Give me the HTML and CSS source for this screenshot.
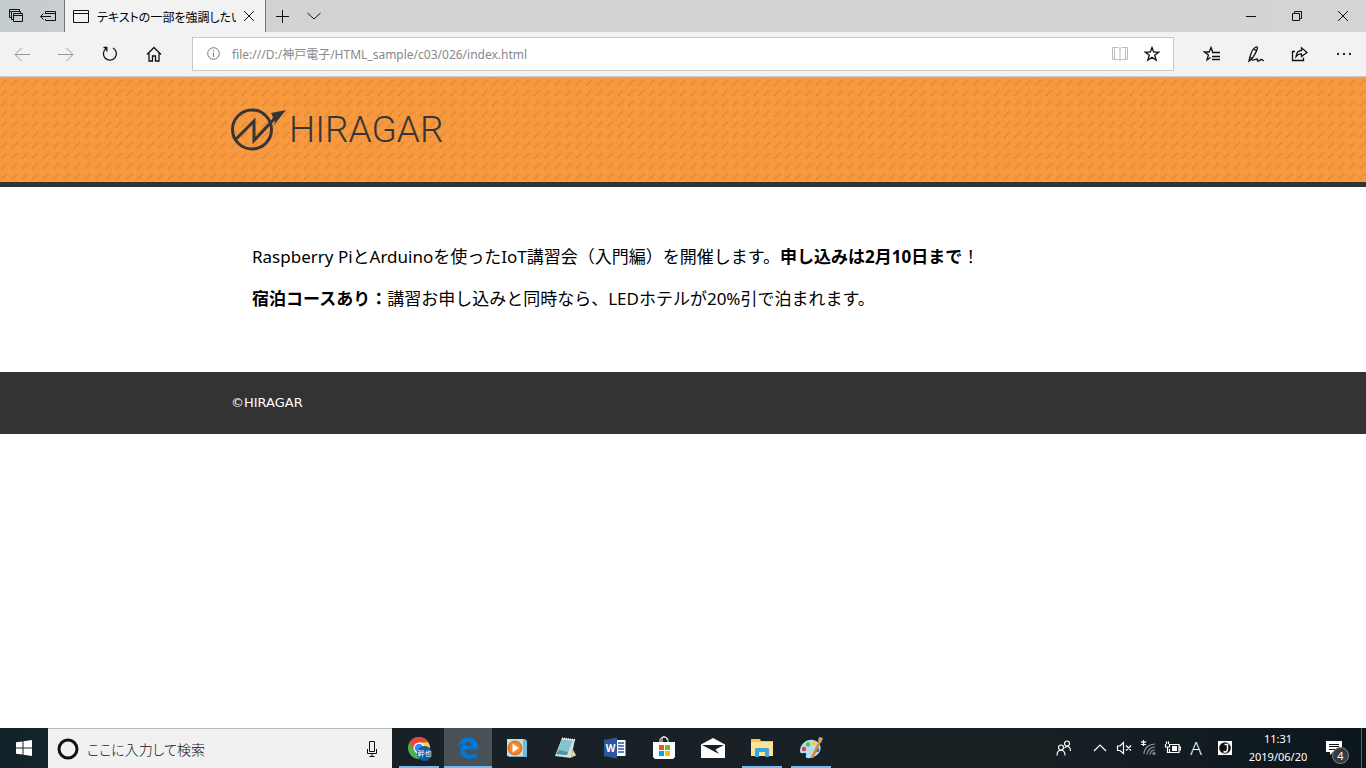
FILE: index.html
```html
<!DOCTYPE html>
<html lang="ja">
<head>
<meta charset="utf-8">
<title>テキストの一部を強調したい</title>
<link rel="stylesheet" href="styles.css">
</head>
<body>
<div class="titlebar">
  <div class="tab-tools">
    <button class="tool tool-tabs" aria-label="表示中のタブ"><svg width="16" height="16" viewBox="0 0 16 16"><path d="M3.500 9.500h-2v-8h10v2M1.500 3.500h2M3.500 4v7.500h2M3.500 3.500h9v2M5.500 5.500h9v8h-9zM5.500 7.500h9"/></svg></button>
    <button class="tool tool-aside" aria-label="タブを保存して閉じる"><svg width="17" height="16" viewBox="0 0 17 16"><path d="M5.500 6V3.500h10v9h-10V11M5 5.500h10.500M.5 8.500H11M3.500 5.500l-3 3 3 3"/></svg></button>
  </div>
  <div class="tab">
    <svg width="17" height="16" viewBox="0 0 17 16"><path d="M.5 2.500h15v12H.5zM.5 5.500h15"/></svg>
    <span class="tab-title">テキストの一部を強調したい</span>
    <button class="tab-close" aria-label="タブを閉じる"><svg width="12" height="12" viewBox="0 0 12 12"><path d="M1 1l10 10M11 1L1 11"/></svg></button>
  </div>
  <button class="new-tab" aria-label="新しいタブ"><svg width="14" height="14" viewBox="0 0 14 14"><path d="M7.500 1v13M1 7.500h13"/></svg></button>
  <button class="tab-menu" aria-label="タブ一覧"><svg width="14" height="8" viewBox="0 0 14 8"><path d="M.5 1l6.500 6 6.500-6"/></svg></button>
  <div class="window-buttons">
    <button aria-label="最小化"><svg width="12" height="12" viewBox="0 0 12 12"><path d="M1 6.500h10"/></svg></button>
    <button aria-label="元に戻す"><svg width="12" height="12" viewBox="0 0 12 12"><path d="M1.500 3.500h7v7h-7zM3.500 3V1.500h7v7H9"/></svg></button>
    <button aria-label="閉じる"><svg width="12" height="12" viewBox="0 0 12 12"><path d="M1 1l10 10M11 1L1 11"/></svg></button>
  </div>
</div>

<div class="toolbar">
  <nav class="nav-buttons">
    <button class="off" aria-label="戻る"><svg width="18" height="16" viewBox="0 0 18 16"><path d="M17 8.500H2M8.500 2L2 8.500 8.500 15"/></svg></button>
    <button class="off" aria-label="進む"><svg width="18" height="16" viewBox="0 0 18 16"><path d="M1 8.500h15M9.500 2L16 8.500 9.500 15"/></svg></button>
    <button aria-label="更新"><svg class="bold" width="18" height="18" viewBox="0 0 18 18"><path d="M5 3.500A6.500 6.500 0 1 0 12 3M2.500 2.500h3.300v4"/></svg></button>
    <button aria-label="ホーム"><svg class="bold" width="18" height="18" viewBox="0 0 18 18"><path d="M2 9.500l7-7 7 7M4 8v8h3.500v-5h3v5H14V8"/></svg></button>
  </nav>
  <form class="address">
    <svg class="info" width="13" height="13" viewBox="0 0 13 13"><circle cx="6.500" cy="6.500" r="5.800"/><path d="M6.500 5.500V10M6.500 3v1.300"/></svg>
    <input type="text" aria-label="アドレス" value="file:///D:/神戸電子/HTML_sample/c03/026/index.html">
    <button type="button" class="reader" aria-label="読み取りビュー"><svg width="18" height="16" viewBox="0 0 18 16"><path d="M1.500 1.500h6L9 3l1.500-1.500h6v12h-6L9 15l-1.500-1.500h-6zM9 3v11M3.500 2v11M14.500 2v11"/></svg></button>
    <button type="button" aria-label="お気に入りに追加"><svg class="bold" width="16" height="16" viewBox="0 0 16 16"><path d="M8 1.500l1.700 4.700h4.900l-3.900 3 1.500 5L8 11.200l-4.200 3 1.500-5-3.900-3h4.900z"/></svg></button>
  </form>
  <div class="hub">
    <button aria-label="ハブ"><svg class="bold" width="18" height="16" viewBox="0 0 18 16"><path d="M7.500 11.500L4 14l1.400-5L1.500 6h4.700L8 1.500 9.700 6M9 6.500h8M9 10.500h8M9 13.500h8"/></svg></button>
    <button aria-label="ノートの追加"><svg class="bold" width="18" height="18" viewBox="0 0 18 18"><path d="M2 16l1-4C4 8 6 3 9 2c3-.5 1 4-4 12zM7 4l2 1.500M3 12l2 1.500M5 15.500l5-1.500c2 0-1 2 1 2s2-1.500 3.500-1.500 1 1.500 2.500 1"/></svg></button>
    <button aria-label="共有"><svg class="bold" width="18" height="16" viewBox="0 0 18 16"><path d="M4 5.500H1.500v9h11v-3M5 10.500c.5-4 2.500-6 5.500-6V1.800l5.500 4.700-5.500 4V7.800C8 7.800 6.500 8.500 5 10.500z"/></svg></button>
    <button aria-label="設定など"><svg width="18" height="16" viewBox="0 0 18 16"><path class="ink" d="M2 7h2v2H2zM8 7h2v2H8zM14 7h2v2h-2z"/></svg></button>
  </div>
</div>

<div class="page">
  <header class="site-header">
    <svg class="pattern" width="100%" height="100%" aria-hidden="true">
      <defs><pattern id="dash" width="10.450" height="10.450" patternUnits="userSpaceOnUse"><path d="M1 6.500h2v2H1zM3 4.500h2v2H3zM5 2.500h2v2H5z"/></pattern></defs>
      <rect width="100%" height="100%" fill="url(#dash)"/>
    </svg>
    <div class="container">
      <a class="logo" href="#">
        <svg width="58" height="46" viewBox="0 0 58 46" aria-hidden="true"><circle cx="21" cy="23.500" r="19.500"/><path d="M4.500 33.500L23 15v19.500L45 11"/><path class="tip" d="M55 4L40 7l2 4-1 3 3 1-1 4z"/></svg>
        <span>HIRAGAR</span>
      </a>
    </div>
  </header>
  <main class="container article">
    <p>Raspberry PiとArduinoを使ったIoT講習会（入門編）を開催します。<strong>申し込みは2月10日まで</strong>！</p>
    <p><strong>宿泊コースあり：</strong>講習お申し込みと同時なら、LEDホテルが20%引で泊まれます。</p>
  </main>
  <footer class="site-footer"><div class="container"><small>©HIRAGAR</small></div></footer>
</div>

<div class="taskbar">
  <button class="start" aria-label="スタート"><svg width="16" height="16" viewBox="0 0 16 16"><path d="M0 2.300L6.500 1.400V7.500H0zM7.500 1.200L16 0v7.500H7.500zM0 8.500h6.500v6.100L0 13.700zM7.500 8.500H16V16l-8.500-1.200z"/></svg></button>
  <label class="search">
    <svg width="22" height="22" viewBox="0 0 22 22"><circle cx="11" cy="11" r="9" stroke-width="3"/></svg>
    <input type="text" placeholder="ここに入力して検索">
    <svg width="12" height="18" viewBox="0 0 12 18"><path d="M3.500 1.500h5v10h-5zM1.500 9v4.500h9V9M6 13.500v3M3.500 16.500h5"/></svg>
  </label>
  <div class="apps">
    <button class="open" aria-label="Chrome"><svg width="26" height="26" viewBox="0 0 26 26"><circle cx="13" cy="13" r="11" fill="#4caf50"/><path d="M3.500 7.500A11 11 0 0 1 22.500 7.500H13L8.500 16z" fill="#e5473c"/><path d="M22.500 7.500A11 11 0 0 1 13 24l5-11-5-5.500z" fill="#ffcd40"/><circle cx="13" cy="13" r="5.500" fill="#fff"/><circle cx="13" cy="13" r="4.300" fill="#4285f4"/><circle cx="18.500" cy="18.500" r="7.500" fill="#0d5aa7"/><text x="18.500" y="21" text-anchor="middle" font-size="7" fill="#fff">幹也</text></svg></button>
    <button class="open active" aria-label="Edge"><svg width="22" height="22" viewBox="0 0 22 22"><path fill="#0078d7" d="M1 10C2 3.500 6.500.5 11.500.5 18 .5 21 5.500 21 10v2.500H7.500c.3 4 3.800 5.200 6.500 5.200 2.200 0 4-.6 5.800-1.700v4.300c-2 1.100-4.500 1.500-7 1.500C7 21.800 3 18.500 3 13.500c0-3 1.500-5.500 4.500-7.200C4.500 6.500 2.500 8 1 10zm6.600-1.300h6.900c0-2.800-1.200-4-3.200-4-2.100 0-3.300 1.700-3.700 4z"/></svg></button>
    <button aria-label="メディアプレーヤー"><svg width="22" height="22" viewBox="0 0 22 22"><path fill="#75b9d8" d="M1 2h18l2 2v16H3l-2-2z"/><path fill="#bce2f0" d="M1 2h16v17H1z"/><circle cx="9" cy="11" r="7.500" fill="#f5892b"/><circle cx="9" cy="11" r="6.500" fill="none" stroke="#d96a18"/><path fill="#fff" d="M6.500 6.500v9L13 11z"/></svg></button>
    <button aria-label="メモ帳"><svg width="24" height="24" viewBox="0 0 24 24"><path fill="#d5dedb" d="M8 2l13 1.500L17 22 1 20z"/><path fill="#86c3cb" d="M8 3l11 1-6 15-11-1z"/><path fill="#4896a3" d="M5 14l9 2-1 3-11-1z"/><path d="M8 2.500l13 1.500" stroke="#fff" stroke-width="2" stroke-dasharray="1 1"/><path fill="#e4d7ae" d="M17 21.500l2-8 3 6z"/></svg></button>
    <button aria-label="Word"><svg width="22" height="22" viewBox="0 0 22 22"><path fill="#fff" d="M12 3h9.500v16H12z"/><path d="M14 6h6M14 9h6M14 12h6M14 15h6" stroke="#2b579a" stroke-width="1.500"/><path fill="#2b579a" d="M0 3l13-2.500v21L0 19z"/><text x="6.500" y="15" text-anchor="middle" font-size="10" font-weight="700" fill="#fff">W</text></svg></button>
    <button aria-label="ストア"><svg width="24" height="24" viewBox="0 0 24 24"><path d="M8 7V4c0-4 8-4 8 0v3M10 6V3c0-4 5-2 5 1" fill="none" stroke="#fff"/><path fill="#fff" d="M1 6h22v15l-2 2H3l-2-2z"/><path fill="#f25022" d="M7 9h5v5H7z"/><path fill="#7fba00" d="M13 9h5v5h-5z"/><path fill="#00a4ef" d="M7 15h5v5H7z"/><path fill="#ffb900" d="M13 15h5v5h-5z"/></svg></button>
    <button aria-label="メール"><svg width="24" height="20" viewBox="0 0 24 20"><path fill="#fff" d="M0 6.500L12 0l12 6.500V20H0z"/><path fill="#182126" d="M1 7h22l-8.500 4.500 3.500 4.500z"/></svg></button>
    <button class="open" aria-label="エクスプローラー"><svg width="22" height="20" viewBox="0 0 22 20"><path fill="#f4c64f" d="M0 1h9l1 2h12v4H0z"/><path fill="#ffe394" d="M0 4h22v14H0z"/><path fill="#35a9df" d="M4 19v-8l1-1h12l1 1v8h-4v-5H8v5z"/></svg></button>
    <button class="open" aria-label="ペイント"><svg width="26" height="24" viewBox="0 0 26 24"><path fill="#b5dcf0" d="M2 15C2 8 9 3 15 4s9 6 7 11-9 8-13 7c-3-1 1-5-2-5s-5 1-5-2z"/><circle cx="6" cy="13" r="2.200" fill="#d84637"/><circle cx="10" cy="8.500" r="2.200" fill="#64b845"/><circle cx="16" cy="7.500" r="2" fill="#f2cc35"/><circle cx="19" cy="14" r="2.200" fill="#3569bd"/><path d="M14 22L22 5" stroke="#d98532" stroke-width="2.500"/><path fill="#c7a678" d="M20 5l1-4 4 1-2 5z"/></svg></button>
  </div>
  <div class="tray">
    <button class="people" aria-label="People"><svg width="16" height="16" viewBox="0 0 16 16"><circle cx="5" cy="7.500" r="2.500"/><circle cx="11" cy="3.500" r="2.500"/><path d="M1 15.500c0-7 8-7 8 0M8.500 8c3-3 6-1.500 6 3"/></svg></button>
    <button aria-label="隠れているインジケーター"><svg width="14" height="8" viewBox="0 0 14 8"><path d="M1 7l6-6 6 6"/></svg></button>
    <button aria-label="スピーカー"><svg width="16" height="14" viewBox="0 0 16 14"><path d="M1.500 5h2.500L7.500 1.500v11L4 9.500H1.500zM10 4.500l5 5M15 4.500l-5 5"/></svg></button>
    <button aria-label="ネットワーク"><svg width="16" height="16" viewBox="0 0 16 16"><path d="M3.500 0v6M1 1.500l5 3M6 1.500l-5 3"/><g class="dim"><path d="M4 14C4 8 9 4 15 4M7 14.500c0-4 4-7.500 8-7.500M10 14.500c0-2.500 2.500-4.500 5-4.500"/><circle cx="14" cy="13.500" r="1"/></g></svg></button>
    <button aria-label="バッテリー"><svg width="17" height="14" viewBox="0 0 17 14"><path d="M5 3.500h10v8H5.500V8M15 6h1.500v3H15M1.500 3v3h4V3M2.500 3V.5M4.500 3V.5M3.500 6v5.500H6"/><path class="ink" d="M8 5h5v5H8z"/></svg></button>
    <button class="ime" aria-label="入力モード">A</button>
    <button class="ime-tool" aria-label="日本語入力"><svg width="14" height="14" viewBox="0 0 14 14"><path fill="#fff" stroke="none" d="M0 0h14v14H0z"/><circle cx="7" cy="7" r="5.800" fill="#111" stroke="none"/><path d="M6.500 3.500h3V8c0 3-2 3.500-4 2.500" stroke-width="1.500"/></svg></button>
    <button class="clock"><span>11:31</span><span>2019/06/20</span></button>
    <button class="notice" aria-label="通知"><svg width="16" height="16" viewBox="0 0 16 16"><path class="ink" d="M0 1h16v11H7l-3 3v-3H0z"/><path d="M3 4.500h10M3 6.500h10M3 9.500h8" stroke="#111"/></svg><span class="badge">4</span></button>
  </div>
</div>
</body>
</html>
```
FILE: styles.css
```css
* { box-sizing: border-box; }

body {
  display: flex;
  flex-direction: column;
  min-height: 100vh;
  margin: 0;
  background: #fff;
  color: #000;
  font-family: "Noto Sans", "Noto Sans CJK JP", sans-serif;
}

button {
  display: flex;
  align-items: center;
  justify-content: center;
  flex: none;
  padding: 0;
  border: 0;
  background: none;
  color: inherit;
  font: inherit;
}

input {
  flex: 1;
  min-width: 0;
  padding: 0;
  border: 0;
  outline: 0;
  background: none;
  font: inherit;
}

svg { display: block; flex: none; }

/* Browser window */
.titlebar svg,
.toolbar svg { fill: none; stroke: #111; stroke-width: 1; }
.toolbar .bold { stroke-width: 1.3; }
.toolbar .ink { fill: #222; stroke: none; }

.titlebar {
  display: flex;
  height: 32px;
  background: linear-gradient(90deg, #c5cccd, #d3d3d3 20%, #d4d4d4);
}
.tab-tools { display: flex; width: 64px; }
.tool { width: 32px; }
.tab {
  display: flex;
  align-items: center;
  width: 202px;
  padding: 0 10px 0 8px;
  border: solid #777;
  border-width: 0 1px;
  background: #f2f2f2;
}
.tab-title {
  flex: 1;
  margin-left: 7px;
  overflow: hidden;
  font-family: "Noto Sans CJK JP", sans-serif;
  font-size: 12px;
  font-feature-settings: "palt";
  white-space: nowrap;
}
.tab-close { width: 12px; margin-left: 7px; }
.new-tab,
.tab-menu { width: 32px; }
.window-buttons { display: flex; margin-left: auto; }
.window-buttons button { width: 46px; }

.toolbar {
  display: flex;
  align-items: center;
  height: 45px;
  padding-bottom: 1px;
  border-bottom: 1px solid #c8c8c8;
  background: #f2f2f2;
}
.nav-buttons { display: flex; width: 192px; }
.nav-buttons button { width: 44px; height: 32px; }
.toolbar .off svg { stroke: #999; }
.address {
  display: flex;
  flex: 1;
  align-items: center;
  height: 34px;
  padding: 0 5px 0 14px;
  border: 1px solid #c8c8c8;
  background: #fff;
  color: #888;
  font-size: 12px;
}
.address input { margin-left: 12px; color: #888; }
.address .info { stroke: #777; }
.address button { width: 32px; }
.address .reader svg { stroke: #bbb; }
.hub { display: flex; margin-left: 16px; }
.hub button { width: 44px; height: 32px; }

/* Web page */
.page { flex: 1; }
.container {
  width: 100%;
  max-width: 944px;
  margin: 0 auto;
  padding: 0 20px;
}
.site-header {
  position: relative;
  padding: 28px 0 29px;
  border-bottom: 5px solid #333;
  background: #f8993f;
}
.pattern { position: absolute; inset: 0; fill: #dd8836; }
.site-header .container { position: relative; }
.logo {
  display: flex;
  align-items: center;
  width: fit-content;
  height: 48px;
  color: #363636;
  font-family: Roboto, sans-serif;
  font-size: 37px;
  font-weight: 300;
  text-decoration: none;
}
.logo svg { fill: none; stroke: #363636; stroke-width: 3; }
.logo .tip { fill: #363636; stroke: none; }
.article {
  padding: 57px 41px 60px;
  font-size: 17px;
  line-height: 26px;
}
.article p { margin: 0 0 16px; }
.article p:last-child { margin: 0; }
.site-footer { padding: 20px 0; background: #333; color: #fff; }
.site-footer small {
  display: block;
  font-family: "DejaVu Sans", sans-serif;
  font-size: 13px;
  line-height: 22px;
}

/* Taskbar */
.taskbar {
  display: flex;
  height: 40px;
  background: linear-gradient(90deg, #12242b, #182126 35%, #182024 75%, #0b171d);
  color: #fff;
}
.start { width: 48px; fill: #fff; }
.search {
  display: flex;
  align-items: center;
  width: 344px;
  padding: 0 14px 0 9px;
  border-top: 1px solid #bbb;
  background: #f1f1f1;
  fill: none;
  stroke: #111;
}
.search input {
  margin-left: 8px;
  font-family: "Noto Sans CJK JP", sans-serif;
  font-size: 14px;
  font-weight: 300;
  font-feature-settings: "palt";
}
.search input::placeholder { color: #111; opacity: 1; }
.apps { display: flex; gap: 1px; margin-left: 3px; }
.apps button { position: relative; width: 48px; }
.open::after {
  content: "";
  position: absolute;
  right: 4px;
  bottom: 0;
  left: 4px;
  height: 2px;
  background: #76b9ed;
}
.active { background: #475156; }
.active::after { right: 0; left: 0; }
.tray { display: flex; margin-left: auto; padding-right: 4px; }
.tray svg { fill: none; stroke: #fff; stroke-width: 1.2; }
.tray .ink { fill: #fff; stroke: none; }
.tray .dim { stroke: #899; }
.tray button { width: 24px; }
.tray .people { width: 48px; }
.tray .ime { font-size: 19px; font-weight: 300; }
.tray .ime-tool { width: 34px; }
.tray .clock {
  flex-direction: column;
  width: 72px;
  font-size: 11px;
  line-height: 18px;
}
.tray .notice {
  position: relative;
  width: 48px;
  padding-right: 8px;
  border-right: 1px solid #566;
}
.badge {
  position: absolute;
  top: 19px;
  right: 12px;
  width: 17px;
  height: 17px;
  border: 1px solid #888;
  border-radius: 50%;
  background: #333c40;
  font-size: 11px;
  line-height: 15px;
  text-align: center;
}
```
